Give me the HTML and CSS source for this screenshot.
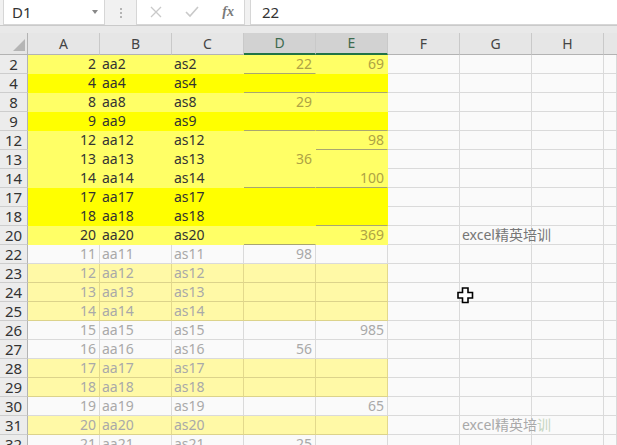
FILE: index.html
```html
<!DOCTYPE html>
<html>
<head>
<meta charset="utf-8">
<link rel="stylesheet" href="styles.css">
</head>
<body>
<div class="toolbar">
  <div class="namebox"><span class="nb-text">D1</span><span class="nb-arrow"></span></div>
  <div class="grip"><i></i><i></i><i></i></div>
  <div class="fxbox">
    <svg class="ico" width="12" height="12" viewBox="0 0 12 12"><path d="M1 1 L11 11 M11 1 L1 11" stroke="#c9c9c9" stroke-width="1.3" fill="none"/></svg>
    <svg class="ico" width="14" height="12" viewBox="0 0 14 12"><path d="M1 6 L5 10 L13 1" stroke="#c9c9c9" stroke-width="1.6" fill="none"/></svg>
    <span class="fx">fx</span>
  </div>
  <div class="formula">22</div>
</div>

<div class="colhead">
  <div class="h corner"><svg width="12" height="12" viewBox="0 0 12 12"><polygon points="12,0 12,12 0,12" fill="#b5b5b5"/></svg></div>
  <div class="h">A</div><div class="h">B</div><div class="h">C</div>
  <div class="h sel">D</div><div class="h sel">E</div>
  <div class="h">F</div><div class="h">G</div><div class="h">H</div><div class="h last"></div>
</div>

<div class="sheet">
  <div class="row up lt"><div class="rh">2</div><div class="c n">2</div><div class="c t">aa2</div><div class="c t">as2</div><div class="c n v bl">22</div><div class="c n v">69</div><div class="c"></div><div class="c"></div><div class="c"></div><div class="c"></div></div>
  <div class="row up bt"><div class="rh">4</div><div class="c n">4</div><div class="c t">aa4</div><div class="c t">as4</div><div class="c n v bl"></div><div class="c n v bl"></div><div class="c"></div><div class="c"></div><div class="c"></div><div class="c"></div></div>
  <div class="row up lt"><div class="rh">8</div><div class="c n">8</div><div class="c t">aa8</div><div class="c t">as8</div><div class="c n v">29</div><div class="c n v"></div><div class="c"></div><div class="c"></div><div class="c"></div><div class="c"></div></div>
  <div class="row up bt"><div class="rh">9</div><div class="c n">9</div><div class="c t">aa9</div><div class="c t">as9</div><div class="c n v bl"></div><div class="c n v bl"></div><div class="c"></div><div class="c"></div><div class="c"></div><div class="c"></div></div>
  <div class="row up lt"><div class="rh">12</div><div class="c n">12</div><div class="c t">aa12</div><div class="c t">as12</div><div class="c n v"></div><div class="c n v bl">98</div><div class="c"></div><div class="c"></div><div class="c"></div><div class="c"></div></div>
  <div class="row up lt"><div class="rh">13</div><div class="c n">13</div><div class="c t">aa13</div><div class="c t">as13</div><div class="c n v">36</div><div class="c n v"></div><div class="c"></div><div class="c"></div><div class="c"></div><div class="c"></div></div>
  <div class="row up lt"><div class="rh">14</div><div class="c n">14</div><div class="c t">aa14</div><div class="c t">as14</div><div class="c n v bl"></div><div class="c n v bl">100</div><div class="c"></div><div class="c"></div><div class="c"></div><div class="c"></div></div>
  <div class="row up bt"><div class="rh">17</div><div class="c n">17</div><div class="c t">aa17</div><div class="c t">as17</div><div class="c n v"></div><div class="c n v"></div><div class="c"></div><div class="c"></div><div class="c"></div><div class="c"></div></div>
  <div class="row up bt"><div class="rh">18</div><div class="c n">18</div><div class="c t">aa18</div><div class="c t">as18</div><div class="c n v"></div><div class="c n v bl"></div><div class="c"></div><div class="c"></div><div class="c"></div><div class="c"></div></div>
  <div class="row up lt"><div class="rh">20</div><div class="c n">20</div><div class="c t">aa20</div><div class="c t">as20</div><div class="c n v bl"></div><div class="c n v">369</div><div class="c"></div><div class="c t note">excel精英培训</div><div class="c"></div><div class="c"></div></div>

  <div class="row lo wh"><div class="rh">22</div><div class="c n">11</div><div class="c t">aa11</div><div class="c t">as11</div><div class="c n">98</div><div class="c n"></div><div class="c"></div><div class="c"></div><div class="c"></div><div class="c"></div></div>
  <div class="row lo yl"><div class="rh">23</div><div class="c n">12</div><div class="c t">aa12</div><div class="c t">as12</div><div class="c n"></div><div class="c n"></div><div class="c"></div><div class="c"></div><div class="c"></div><div class="c"></div></div>
  <div class="row lo yl"><div class="rh">24</div><div class="c n">13</div><div class="c t">aa13</div><div class="c t">as13</div><div class="c n"></div><div class="c n"></div><div class="c"></div><div class="c"></div><div class="c"></div><div class="c"></div></div>
  <div class="row lo yl"><div class="rh">25</div><div class="c n">14</div><div class="c t">aa14</div><div class="c t">as14</div><div class="c n"></div><div class="c n"></div><div class="c"></div><div class="c"></div><div class="c"></div><div class="c"></div></div>
  <div class="row lo wh"><div class="rh">26</div><div class="c n">15</div><div class="c t">aa15</div><div class="c t">as15</div><div class="c n"></div><div class="c n">985</div><div class="c"></div><div class="c"></div><div class="c"></div><div class="c"></div></div>
  <div class="row lo wh"><div class="rh">27</div><div class="c n">16</div><div class="c t">aa16</div><div class="c t">as16</div><div class="c n">56</div><div class="c n"></div><div class="c"></div><div class="c"></div><div class="c"></div><div class="c"></div></div>
  <div class="row lo yl"><div class="rh">28</div><div class="c n">17</div><div class="c t">aa17</div><div class="c t">as17</div><div class="c n"></div><div class="c n"></div><div class="c"></div><div class="c"></div><div class="c"></div><div class="c"></div></div>
  <div class="row lo yl"><div class="rh">29</div><div class="c n">18</div><div class="c t">aa18</div><div class="c t">as18</div><div class="c n"></div><div class="c n"></div><div class="c"></div><div class="c"></div><div class="c"></div><div class="c"></div></div>
  <div class="row lo wh"><div class="rh">30</div><div class="c n">19</div><div class="c t">aa19</div><div class="c t">as19</div><div class="c n"></div><div class="c n">65</div><div class="c"></div><div class="c"></div><div class="c"></div><div class="c"></div></div>
  <div class="row lo yl"><div class="rh">31</div><div class="c n">20</div><div class="c t">aa20</div><div class="c t">as20</div><div class="c n"></div><div class="c n"></div><div class="c"></div><div class="c t note2">excel精英培<span class="g">训</span></div><div class="c"></div><div class="c"></div></div>
  <div class="row lo wh"><div class="rh">32</div><div class="c n">21</div><div class="c t">aa21</div><div class="c t">as21</div><div class="c n">25</div><div class="c n"></div><div class="c"></div><div class="c"></div><div class="c"></div><div class="c"></div></div>
</div>

<svg class="cursor" width="17" height="17" viewBox="0 0 17 17"><polygon points="5.5,1 11,1 11,5.5 15.5,5.5 15.5,11 11,11 11,15.5 5.5,15.5 5.5,11 1,11 1,5.5 5.5,5.5" fill="#fff" stroke="#000" stroke-width="1.6"/></svg>
</body>
</html>
```

FILE: styles.css
```css
* { box-sizing: border-box; }
html, body { margin: 0; padding: 0; }
body {
  width: 617px;
  height: 445px;
  overflow: hidden;
  background: #fafafa;
  font-family: "Noto Sans", "Noto Sans CJK SC", sans-serif;
  position: relative;
}

/* toolbar */
.toolbar {
  display: flex;
  height: 26px;
  background: #f1f1f1;
  border-bottom: 1px solid #cacaca;
}
.namebox {
  margin-left: 3px;
  width: 102px;
  height: 25px;
  background: #fff;
  border: 1px solid #d6d6d6;
  border-top: 0;
  display: flex;
  align-items: center;
  justify-content: space-between;
  padding: 0 6px 0 8px;
  font-size: 15px;
  color: #333;
}
.nb-arrow {
  width: 0; height: 0;
  border-left: 3.5px solid transparent;
  border-right: 3.5px solid transparent;
  border-top: 4px solid #888;
}
.grip {
  width: 31px;
  display: flex;
  flex-direction: column;
  align-items: center;
  justify-content: center;
  gap: 2px;
}
.grip i {
  display: block;
  width: 2px; height: 2px;
  background: #b4b4b4;
}
.fxbox {
  width: 109px;
  height: 25px;
  background: #fff;
  border: 1px solid #d6d6d6;
  border-top: 0;
  display: flex;
  align-items: center;
  justify-content: space-between;
  padding: 0 10px 0 13px;
}
.fx {
  font-family: "Liberation Serif", serif;
  font-style: italic;
  font-size: 14px;
  color: #7a7a7a;
  font-weight: bold;
}
.formula {
  flex: 1;
  margin-left: 5px;
  height: 25px;
  background: #fff;
  border: 1px solid #d6d6d6;
  border-top: 0;
  border-right: 0;
  padding-left: 11px;
  font-size: 15px;
  line-height: 24px;
  color: #333;
}

/* column header */
.colhead {
  display: grid;
  grid-template-columns: 28px repeat(8, 72px) 1fr;
  height: 29px;
  padding-top: 7px;
  background: #e9e9e9;
}
.h {
  border-right: 1px solid #c9c9c9;
  border-bottom: 1px solid #b3b3b3;
  text-align: center;
  font-size: 14px;
  line-height: 21px;
  color: #444;
  background: #e6e6e6;
}
.h.corner {
  display: flex;
  align-items: flex-end;
  justify-content: flex-end;
  padding: 0 2px 3px 0;
  border-right-color: #b3b3b3;
}
.h.sel {
  background: #d2d2d2;
  color: #3d6b4f;
  border-bottom: 2px solid #217346;
  line-height: 20px;
}
.h.last { border-right: 0; }

/* sheet rows */
.row {
  display: grid;
  grid-template-columns: 28px repeat(8, 72px) 1fr;
  height: 19px;
}
.rh {
  background: #ececec;
  border-right: 1px solid #b3b3b3;
  border-bottom: 1px solid #cdcdcd;
  text-align: center;
  font-size: 15px;
  line-height: 18px;
  color: #333;
}
.c {
  border-right: 1px solid #dadada;
  border-bottom: 1px solid #dadada;
  font-size: 14px;
  line-height: 18px;
  white-space: nowrap;
  overflow: visible;
  position: relative;
  z-index: 1;
}
.c.n { text-align: right; padding-right: 3px; }
.c.t { padding-left: 2px; }

/* upper section (yellow fills) */
.up .c:nth-child(-n+6) { color: #333; }
.up .c.v { color: #aea344; }
.up.lt .c:nth-child(-n+6) {
  background: #ffff66;
  border-color: #ffff66;
}
.up.bt .c:nth-child(-n+6) {
  background: #ffff00;
  border-color: #ffff00;
}
.up .c.bl { border-bottom-color: #a9a670 !important; }

.note { color: #767676; padding-left: 2px; }
.note2 { color: #b3b3b3; padding-left: 2px; }
.note2 .g { color: #c6d6bf; }

/* lower section */
.lo .c { color: #a9a9a9; }
.lo.wh .c { background: #fafafa; }
.lo.yl .c:nth-child(-n+6) {
  background: #fff9a6;
  border-right-color: #e3d98c;
  border-bottom-color: #dcd38b;
}

.cursor {
  position: absolute;
  left: 457px;
  top: 287px;
  z-index: 5;
}
```
